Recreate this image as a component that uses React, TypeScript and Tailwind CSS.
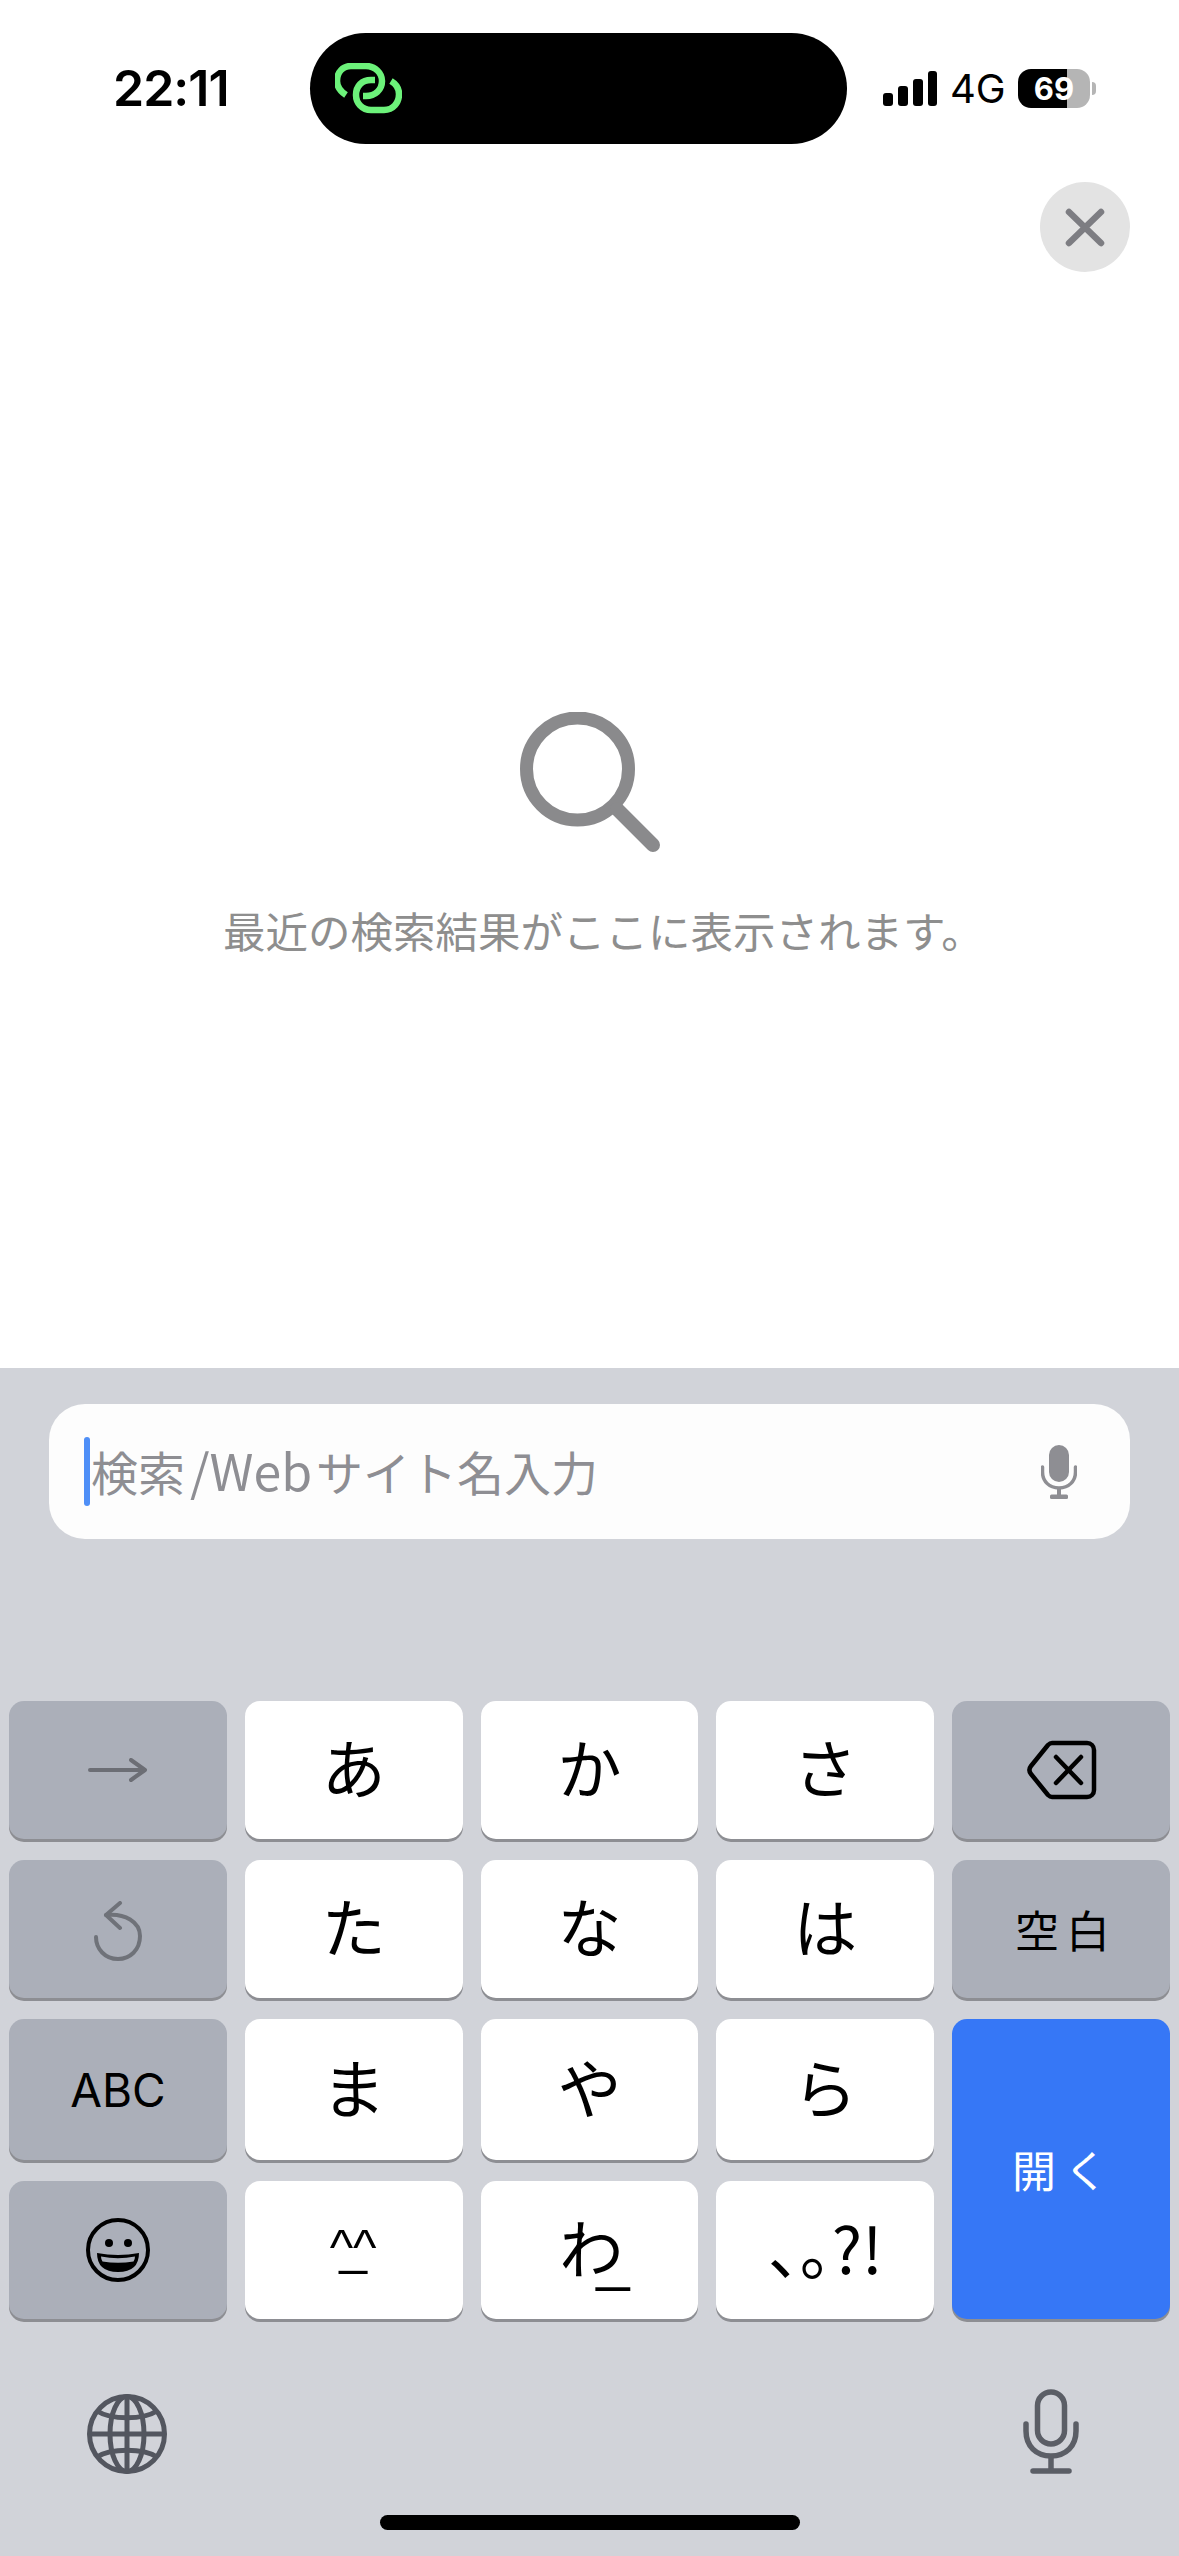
import type { ReactNode } from 'react';

const Key = ({ children, dark, className = '' }: { children: ReactNode; dark?: boolean; className?: string }) => (
  <div
    className={`flex items-center justify-center rounded-[15px] leading-none text-black shadow-[0_3px_0_#8d8e93] ${
      dark ? 'bg-[#abafb9]' : 'bg-white'
    } ${className}`}>
    {children}
  </div>
);

const Kana = ({ children }: { children: ReactNode }) => (
  <Key className="pb-[10px] text-[64px]">{children}</Key>
);

function StatusBar() {
  return (
    <div className="mt-[33px] flex h-[111px] items-center">
      <div className="ml-[113px] w-[197px] pb-[1px] font-['Inter',sans-serif] text-[50px] font-semibold leading-none tracking-[-1px] text-black">
        22:11
      </div>
      <div className="flex h-[111px] w-[537px] items-center rounded-full bg-black pl-[25px]">
        <svg width="67" height="52" viewBox="15 13 67 52" fill="none" stroke="#6cf27a" strokeWidth="6.5" strokeLinecap="butt">
          <path d="M26 45 C20 41 17 37 17 31 C17 22 23 16 31 16 H46 C55 16 62 23 62 31 C62 40 55 46 46 46 H43" />
          <path d="M71 31 C76 34 79 38 79 44 C79 53 73 60 64 60 H51 C42 60 36 53 36 45 C36 36 42 30 51 30 H55" />
        </svg>
      </div>
      <div className="ml-[36px] flex items-end gap-[5px]">
        <div className="h-[13px] w-[10px] rounded-[3px] bg-black" />
        <div className="h-[20px] w-[10px] rounded-[3px] bg-black" />
        <div className="h-[27px] w-[10px] rounded-[3px] bg-black" />
        <div className="h-[35px] w-[9px] rounded-[3px] bg-black" />
      </div>
      <div className="ml-[13px] w-[68px] font-['Inter',sans-serif] text-[40px] leading-none text-black">4G</div>
      <div className="flex h-[39px] w-[72px] items-center justify-center overflow-hidden rounded-[13px] bg-[linear-gradient(90deg,#000_68%,#b5b5b5_68%)] font-['Inter',sans-serif] text-[31px] font-bold leading-none text-white">
        69
      </div>
      <div className="ml-[2px] h-[13px] w-[4px] rounded-r-full bg-[#b5b5b5]" />
    </div>
  );
}

function SearchEmpty() {
  return (
    <div className="flex flex-col items-center">
      <svg className="ml-[3px] mt-[440px]" width="142" height="140" viewBox="0 0 142 140" fill="none" stroke="#8a8a8c" strokeWidth="13" strokeLinecap="round">
        <circle cx="57.500" cy="57" r="51" />
        <path d="M97 97 L133 133" strokeWidth="14" />
      </svg>
      <div className="ml-[28px] mt-[48px] text-[42.500px] leading-[60px] text-[#8e8e8e]">最近の検索結果がここに表示されます。</div>
    </div>
  );
}

function SearchInput() {
  return (
    <div className="mx-[49px] mt-[36px] flex h-[135px] items-center rounded-[36px] bg-[#fdfdfd] pl-[35px] pr-[53px]">
      <div className="h-[69px] w-[6px] rounded-full bg-[#4f8ff7]" />
      <div className="mb-[6px] ml-[1px] flex flex-1 items-baseline whitespace-pre text-[#8e8e93]">
        <span className="text-[47px] leading-none">検索</span>
        <span className="ml-[5px] text-[50px] leading-none">/Web</span>
        <span className="ml-[4px] text-[47px] leading-none">サイト名入力</span>
      </div>
      <svg width="36" height="54" viewBox="0 0 36 54" fill="none">
        <rect x="8" y="0" width="20" height="37" rx="10" fill="#8e8e93" />
        <path d="M1.5 22 V27 C1.5 36 8 43 18 43 C28 43 34.500 36 34.500 27 V22" stroke="#8e8e93" strokeWidth="3.500" strokeLinecap="round" />
        <path d="M18 43 V51" stroke="#8e8e93" strokeWidth="4" />
        <rect x="9" y="49.500" width="18" height="4.500" rx="1.500" fill="#8e8e93" />
      </svg>
    </div>
  );
}

function Keys() {
  return (
    <div className="mx-[9px] mt-[162px] grid grid-cols-5 grid-rows-[138px_138px_141px_138px] gap-x-[18px] gap-y-[21px]">
      <Key dark>
        <svg width="60" height="24" viewBox="0 0 60 24" fill="none" stroke="#6c6e75" strokeWidth="4" strokeLinecap="round" strokeLinejoin="round">
          <path d="M2 12 H57 M43 2 L57 12 L43 22" />
        </svg>
      </Key>
      <Kana>あ</Kana>
      <Kana>か</Kana>
      <Kana>さ</Kana>
      <Key dark>
        <svg className="ml-[2px]" width="70" height="60" viewBox="0 0 70 60" fill="none" stroke="#000" strokeWidth="4.500" strokeLinejoin="round" strokeLinecap="round">
          <path d="M25 3 H60 C64 3 67 6 67 10 V50 C67 54 64 57 60 57 H25 C23 57 22 56 21 55 L4 34 C2 31.500 2 28.500 4 26 L21 5 C22 4 23 3 25 3 Z" />
          <path d="M29 17 L54 43 M54 17 L29 43" />
        </svg>
      </Key>

      <Key dark>
        <svg className="mt-[4px]" width="50" height="60" viewBox="0 0 50 60" fill="none" stroke="#6f7279" strokeWidth="4" strokeLinecap="round" strokeLinejoin="round">
          <path d="M27 2 L13 14 L27 27" />
          <path d="M13 14 C32 12 47 21 47 35 C47 49 37 58 25 58 C12 58 3 48 3 36" />
        </svg>
      </Key>
      <Kana>た</Kana>
      <Kana>な</Kana>
      <Kana>は</Kana>
      <Key dark className="text-[44px]">
        <span className="ml-[10px] tracking-[7px]">空白</span>
      </Key>

      <Key dark className="font-['Inter',sans-serif] text-[46px]">ABC</Key>
      <Kana>ま</Kana>
      <Kana>や</Kana>
      <Kana>ら</Kana>
      <div className="row-span-2 flex items-center justify-center rounded-[15px] bg-[#3677f6] text-[44px] leading-none text-white shadow-[0_3px_0_#8d8e93]">
        <span className="ml-[6px] tracking-[8px]">開く</span>
      </div>

      <Key dark>
        <svg width="64" height="66" viewBox="0 0 64 66" fill="none">
          <circle cx="32" cy="33" r="30" stroke="#000" strokeWidth="4" />
          <circle cx="23" cy="26" r="4" fill="#000" />
          <circle cx="42" cy="26" r="4" fill="#000" />
          <path d="M11 36 Q32 40 53 36 Q53 55 32 55 Q11 55 11 36 Z" fill="#000" />
          <path d="M15 39.500 Q32 43 49 39.500 Q49 42.500 47.500 44.500 Q32 47 16.500 44.500 Q15 42.500 15 39.500 Z" fill="#abafb9" />
        </svg>
      </Key>
      <Key className="pb-[6px] font-['Liberation_Sans',sans-serif] text-[50px]">
        <span className="mr-[15px] tracking-[-14px]">^_^</span>
      </Key>
      <Key className="pb-[10px] text-[64px]">
        <span className="pl-[10px]">わ</span>
        <span className="relative top-[14px] -ml-[27px] font-['Liberation_Sans',sans-serif] text-[60px]">_</span>
      </Key>
      <Key className="pb-[8px] text-[64px] [font-feature-settings:'halt']">、。?!</Key>
    </div>
  );
}

function BottomBar() {
  return (
    <>
      <div className="ml-[87px] mr-[100px] mt-[75px] flex items-start justify-between">
        <svg width="80" height="80" viewBox="0 0 80 80" fill="none" stroke="#53565f" strokeWidth="5">
          <circle cx="40" cy="40" r="37.500" />
          <ellipse cx="40" cy="40" rx="17" ry="37.500" />
          <path d="M40 2.500 V77.500 M2.500 40 H77.500" />
          <path d="M10 17 C24 26 56 26 70 17 M10 63 C24 54 56 54 70 63" />
        </svg>
        <svg className="-mt-[5px]" width="56" height="85" viewBox="0 0 56 85" fill="none" stroke="#5b5e66" strokeWidth="5.500" strokeLinecap="round">
          <rect x="14.500" y="3" width="27" height="52" rx="13.500" />
          <path d="M3 35 V42 C3 57 13 67 28 67 C43 67 53 57 53 42 V35" />
          <path d="M28 67 V82" strokeLinecap="butt" />
          <path d="M10 82 H46" />
        </svg>
      </div>
      <div className="ml-[380px] mt-[41px] h-[15px] w-[420px] rounded-full bg-black" />
    </>
  );
}

export default function App() {
  return (
    <div className="flex h-[2556px] w-[1179px] flex-col overflow-hidden bg-white font-['Noto_Sans_CJK_JP',sans-serif]">
      <div className="flex h-[1368px] flex-col">
        <StatusBar />
        <div className="mr-[49px] mt-[38px] flex h-[90px] w-[90px] items-center justify-center self-end rounded-full bg-[#e3e3e3]">
          <svg width="40" height="39" viewBox="0 0 40 39" fill="none" stroke="#7d7d82" strokeWidth="6.500" strokeLinecap="round">
            <path d="M4 4 L36 35 M36 4 L4 35" />
          </svg>
        </div>
        <SearchEmpty />
      </div>
      <div className="flex-1 bg-[#d1d3d9]">
        <SearchInput />
        <Keys />
        <BottomBar />
      </div>
    </div>
  );
}
